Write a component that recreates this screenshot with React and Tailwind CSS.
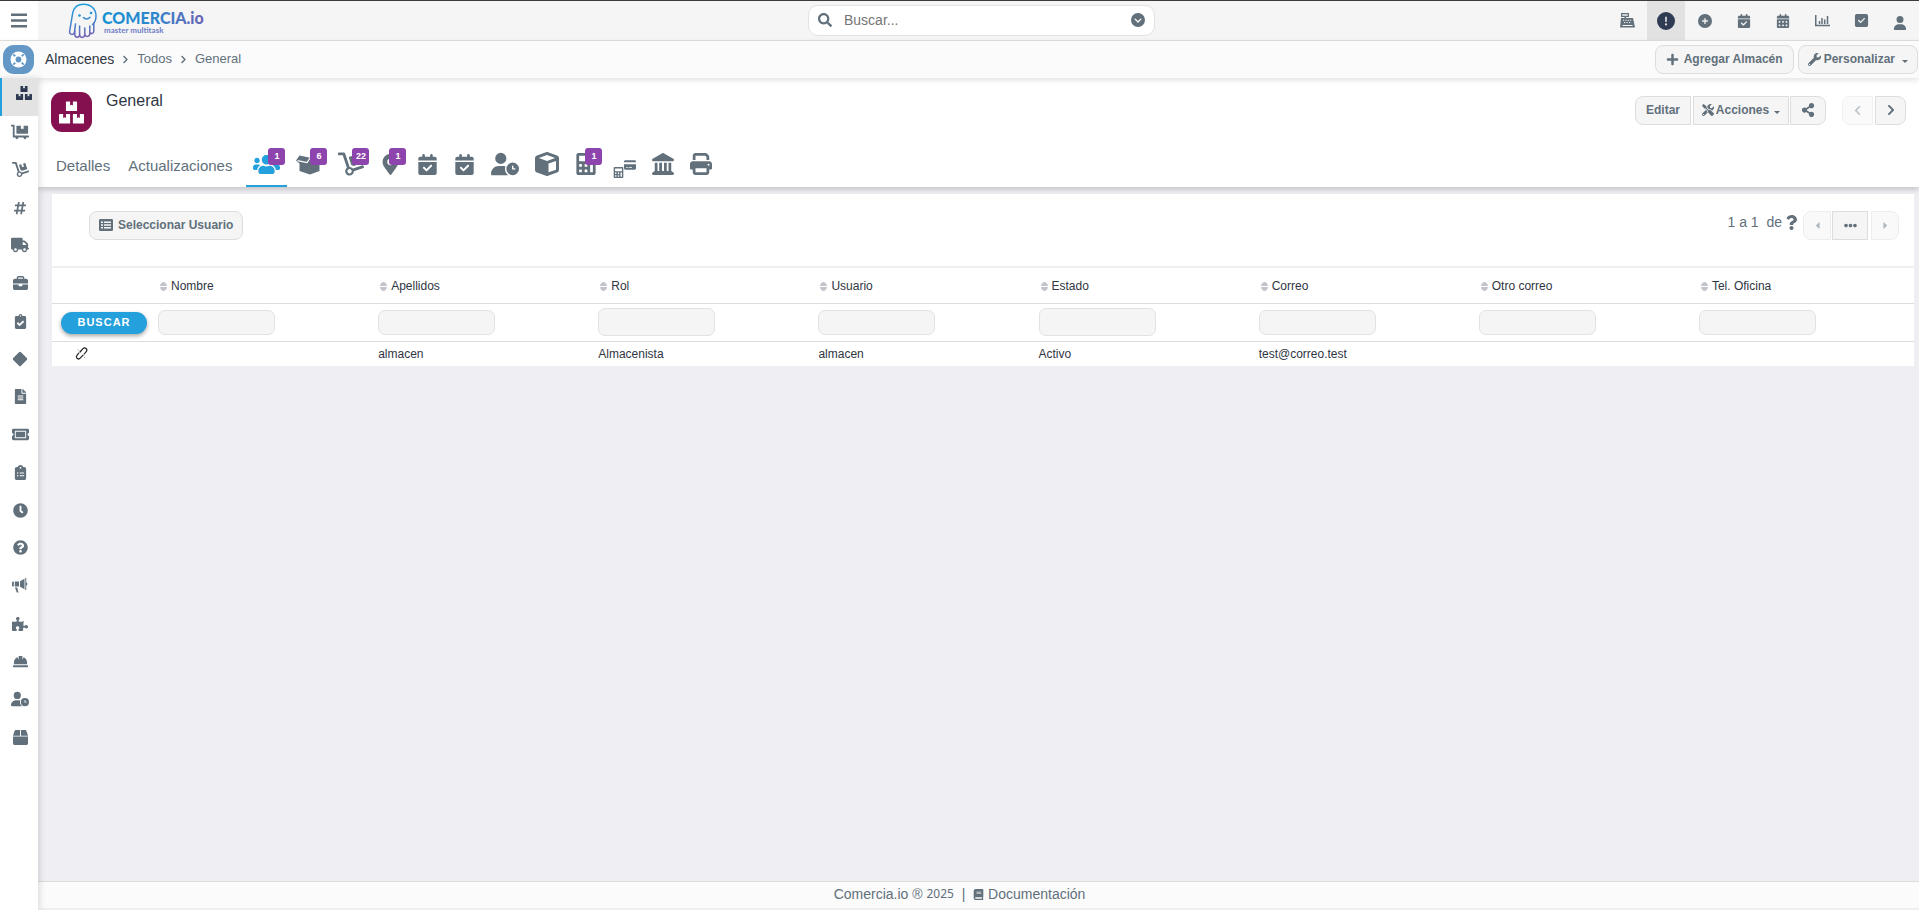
import { useId } from 'react'
import {
  FaBriefcase, FaCalendarCheck, FaCalendarDays, FaCircleChevronDown, FaCircleExclamation, FaCirclePlus,
  FaClipboardList, FaCreditCard, FaCube, FaLandmark, FaPrint, FaSquareCheck, FaTruck, FaUser, FaUserClock,
} from 'react-icons/fa6'
import {
  FaBook, FaBox, FaBoxes, FaCalculator, FaCaretLeft, FaCaretRight, FaChevronLeft, FaChevronRight, FaClipboardCheck,
  FaClock, FaDolly, FaDollyFlatbed, FaEllipsisH, FaFileAlt, FaHardHat, FaHashtag, FaMapMarkerAlt, FaPlus,
  FaPuzzlePiece, FaQuestion, FaQuestionCircle, FaSearch, FaShareAlt, FaTicketAlt, FaTools, FaUsers, FaWrench,
} from 'react-icons/fa'

function Bullhorn() {
  return (
    <svg width="16" height="15" viewBox="0 0 16 15" fill="currentColor">
      <path d="M0 4.500C0 3.500 1 3.500 1.800 3.500V8.500C1 8.500 0 8.500 0 7.500zM2.800 3.500H7V8.500H2.800zM8 3.300L12.500.8v10.400L8 8.700zM13.300 0h1v4.500c1.500.3 1.500 2.700 0 3V12h-1z" />
      <path d="M3 9.500h2.200L6.500 14.500H4.800z" />
    </svg>
  )
}

function Diamond() {
  return (
    <svg width="16" height="16" viewBox="0 0 16 16" fill="currentColor">
      <path d="M7 1.200Q8 .2 9 1.200L14.800 7Q15.800 8 14.800 9L9 14.800Q8 15.800 7 14.800L1.200 9Q.2 8 1.200 7z" />
    </svg>
  )
}

const sideItems = [
  ['Inventario', <FaDollyFlatbed size={18} />],
  ['Traslados', <FaDolly size={17} />],
  ['Series', <FaHashtag size={14} />],
  ['Envíos', <FaTruck size={18} />],
  ['Negocios', <FaBriefcase size={15} />],
  ['Tareas', <FaClipboardCheck size={15} />],
  ['Productos', <Diamond />],
  ['Documentos', <FaFileAlt size={15} />],
  ['Tickets', <FaTicketAlt size={17} />],
  ['Listas', <FaClipboardList size={15} />],
  ['Horarios', <FaClock size={15} />],
  ['Ayuda', <FaQuestionCircle size={15} />],
  ['Anuncios', <Bullhorn />],
  ['Extensiones', <FaPuzzlePiece size={16} />],
  ['Obras', <FaHardHat size={15} />],
  ['Turnos', <FaUserClock size={18} />],
  ['Paquetes', <FaBox size={15} />],
]

const columns = ['Nombre', 'Apellidos', 'Rol', 'Usuario', 'Estado', 'Correo', 'Otro correo', 'Tel. Oficina']
const row = ['', 'almacen', 'Almacenista', 'almacen', 'Activo', 'test@correo.test', '', '']

const button = 'flex items-center justify-center h-[29px] border border-[#dcdddf] bg-[#f5f5f5] pb-px text-xs font-bold text-[#61707b]'

function CashRegister() {
  return (
    <svg width="15" height="15" viewBox="0 0 15 15" fill="currentColor">
      <path d="M1 0h8v4H6v2h6.500l1.500 5H1l1-5h2.500V4H1zM2.300 1.200v1.500h5.400V1.200z" fillRule="evenodd" />
      <path d="M1 5h12l2 9.500H0z" />
      <path d="M3 6.800h1.200v1H3zM5.300 6.800h1.200v1H5.300zM7.600 6.800h1.200v1H7.600zM9.900 6.800h1.200v1H9.900zM4 9h1.200v1H4zM6.500 9h1.200v1H6.500zM9 9h1.200v1H9zM2.500 12h10v1h-10z" fill="#f5f5f5" />
    </svg>
  )
}

function BarChart() {
  return (
    <svg width="15" height="12" viewBox="0 0 15 12" fill="none" stroke="currentColor" strokeWidth="1.500">
      <path d="M.75 0v10.500H15M4.500 6v3M7 3v6M9.700 4.500V9M12.500 1v8" />
    </svg>
  )
}

function Lifebuoy() {
  return (
    <svg width="17" height="17" viewBox="0 0 17 17">
      <circle cx="8.500" cy="8.500" r="8" fill="#fff" />
      <path d="M3.300 3.300l10.400 10.400M13.700 3.300L3.300 13.700" stroke="#6398c6" strokeWidth="1.800" />
      <circle cx="8.500" cy="8.500" r="4.600" fill="#fff" />
      <circle cx="8.500" cy="8.500" r="2.900" fill="#6398c6" />
    </svg>
  )
}

function OpenBox() {
  return (
    <svg width="26" height="21" viewBox="0 0 26 21" fill="currentColor">
      <path d="M3.500 1.500L13 3.500l9-2 3.500 5-2 1V17L14 20.500 3.500 17V9.500L0 6.500z" />
      <path d="M1.500 6.700l9.500 1.800L14 4l3.500 5 2-2 3 1.500" fill="none" stroke="#fff" strokeWidth="1.200" />
    </svg>
  )
}

function Unlink() {
  return (
    <svg width="13" height="13" viewBox="0 0 13 13" fill="none" stroke="#222" strokeWidth="1.200" strokeLinecap="round">
      <path d="M5 5l3-3.300a2 2 0 0 1 3.200 2.900L9.300 7M8 8.200l-2.800 3A2 2 0 0 1 2 8.300L3.700 6.200" />
      <path d="M3 2.500l1 1M9 10l1 1" strokeWidth=".8" stroke="#999" />
    </svg>
  )
}

function TableList() {
  return (
    <svg width="14" height="12" viewBox="0 0 14 12" fill="currentColor">
      <rect width="14" height="12" rx="1.300" />
      <path d="M2 2.500h2v1.500H2zM5 2.500h7v1.500H5zM2 5.300h2v1.500H2zM5 5.300h7v1.500H5zM2 8.100h2v1.500H2zM5 8.100h7v1.500H5z" fill="#f5f5f5" />
    </svg>
  )
}

function SortIcon() {
  return (
    <svg width="7" height="9" viewBox="0 0 7 9" fill="#c3c5cc">
      <path d="M0 4C0 2 2 0 3.500 0S7 2 7 4zM0 5h7c0 2-2 4-3.500 4S0 7 0 5z" />
    </svg>
  )
}

function Caret() {
  return <span className="mt-1 border-x-3 border-t-3 border-x-transparent border-t-[#61707b]" />
}

function Logo() {
  const id = useId()
  return (
    <svg width="138" height="36" viewBox="0 0 138 36" role="img" aria-label="COMERCIA.io master multitask">
      <defs>
        <linearGradient id={id + 'g'} gradientUnits="userSpaceOnUse" x1="8" y1="0" x2="14" y2="36">
          <stop offset="0" stopColor="#1aa3e0" />
          <stop offset=".5" stopColor="#3b86cf" />
          <stop offset="1" stopColor="#7a5db0" />
        </linearGradient>
        <linearGradient id={id + 't'} gradientUnits="userSpaceOnUse" x1="34" y1="0" x2="136" y2="0">
          <stop offset="0" stopColor="#1792d2" />
          <stop offset=".5" stopColor="#2f86cd" />
          <stop offset="1" stopColor="#6a63b5" />
        </linearGradient>
      </defs>
      <g fill="none" stroke={`url(#${id}g)`} strokeWidth="1.500" strokeLinecap="round" strokeLinejoin="round">
        <path d="M7.500 21L6.500 29C6 32.500 1.200 32 1.600 28.500L4.700 10C6 4 10 1.200 15.500 1.200 23 1.200 28 6 28 13c0 4-1.500 7-3.500 8.500" />
        <path d="M6.800 28v3.500c0 3.500 4.800 3.500 4.800 0V23M11.600 31c0 4.500 5.200 4.500 5.200 0v-6M16.800 31c.5 3.500 5 3 5-.5V23M21.800 29c.8 2.500 4 2 4-1V20" />
        <path d="M15.500 14.500c1.500 2 4.500 2 6.500-.3" />
      </g>
      <circle cx="11.500" cy="12.500" r="1.300" fill="#1f93d5" />
      <circle cx="23" cy="10" r="1.300" fill="#1f93d5" />
      <text x="34" y="21" fontFamily="Lato, sans-serif" fontWeight="900" fontSize="16" fill={`url(#${id}t)`}>COMERCIA.io</text>
      <text x="36" y="30" fontFamily="Lato, sans-serif" fontWeight="700" fontSize="8" fill="#6f80c6">master multitask</text>
    </svg>
  )
}

function TopBar() {
  return (
    <header className="flex h-[41px] items-stretch border-t border-b border-t-[#3c3a3d] border-b-[#e0e0e0] bg-[#f5f5f5]">
      <button aria-label="Menú" className="flex w-[38px] shrink-0 items-center justify-center bg-white pb-px">
        <svg width="16" height="15" viewBox="0 0 16 15" fill="#61707b"><path d="M0 .5h16V3H0zM0 6.300h16v2.500H0zM0 12h16v2.500H0z" /></svg>
      </button>
      <div className="flex flex-1 basis-0 items-center pl-[6px]">
        <a href="#inicio" aria-label="Inicio" className="ml-6"><Logo /></a>
      </div>
      <form className="my-1 flex h-[31px] w-[347px] items-center gap-3 rounded-[10px] border border-[#e2e2e2] bg-white px-[9px] pb-[2px]">
        <FaSearch size={14} />
        <input aria-label="Buscar" placeholder="Buscar..." className="min-w-0 flex-1 text-sm outline-none placeholder:text-[#757575]" />
        <button type="button" aria-label="Opciones"><FaCircleChevronDown size={14} /></button>
      </form>
      <div className="flex flex-1 basis-0 items-stretch justify-end gap-px">
        {[
          ['Caja', <CashRegister />],
          ['Avisos', <FaCircleExclamation size={18} className="text-[#2f3b52]" />],
          ['Crear', <FaCirclePlus size={14} />],
          ['Actividades', <FaCalendarCheck size={14} />],
          ['Calendario', <FaCalendarDays size={14} />],
          ['Reportes', <BarChart />],
          ['Tareas', <FaSquareCheck size={15} />],
          ['Perfil', <FaUser size={14} className="mt-1" />],
        ].map(([label, icon]) => (
          <button
            key={label}
            aria-label={label}
            className={`flex w-[38px] items-center justify-center ${label === 'Avisos' ? 'bg-[#e2e2e2]' : ''}`}
          >
            {icon}
          </button>
        ))}
      </div>
    </header>
  )
}

function Breadcrumbs() {
  return (
    <div className="relative z-10 flex h-[37px] items-center justify-between bg-[#fbfbfb] pr-px shadow-[0_2px_6px_rgba(0,0,0,0.12)]">
      <nav className="flex items-center text-[13px]">
        <a href="#modulos" aria-label="Módulos" className="ml-[3px] flex h-[29px] w-[31px] items-center justify-center rounded-[11px] bg-[#6398c6]">
          <Lifebuoy />
        </a>
        <a href="#almacenes" className="ml-[11px] pb-px text-sm text-[#2f3542]">Almacenes</a>
        <FaChevronRight size={9} className="mx-[7px]" />
        <a href="#todos" className="pb-[2px]">Todos</a>
        <FaChevronRight size={9} className="mx-[7px]" />
        <a href="#general" className="pb-[2px]">General</a>
      </nav>
      <div className="flex gap-1">
        <button className={`${button} gap-[5px] rounded-[8px] px-[10px]`}><FaPlus size={13} />Agregar Almacén</button>
        <button className={`${button} gap-[3px] rounded-[8px] px-[9px]`}><FaWrench size={13} />Personalizar<span className="w-px" /><Caret /></button>
      </div>
    </div>
  )
}

function Sidebar() {
  return (
    <nav className="relative z-10 w-[38px] shrink-0 bg-white shadow-[2px_0_6px_rgba(0,0,0,0.12)]">
      <a href="#almacenes" aria-label="Almacenes" className="flex h-[38px] justify-center border-l-2 border-[#24a0dc] bg-[#e3e3e3] pt-[7px] pl-[7px] text-[#2f3b52]">
        <FaBoxes size={16} className="shrink-0" />
      </a>
      <div className="flex h-[637px] flex-col justify-between">
        {sideItems.map(([label, icon]) => (
          <a key={label} href="#menu" aria-label={label} className="flex h-8 items-center justify-center pl-[2px]">{icon}</a>
        ))}
      </div>
    </nav>
  )
}

function Tab({ label, badge, active, children }) {
  return (
    <a
      href="#tab"
      aria-label={label}
      className={`relative flex h-[46px] items-center justify-center border-b-2 px-[7px] pt-[2px] ${active ? 'border-[#24a0dc] text-[#24a0dc]' : 'border-transparent'}`}
    >
      {children}
      {badge && (
        <span className="absolute top-[7px] right-[2px] flex size-[17px] items-center justify-center rounded-[3px] bg-[#8e44ad] text-[9px] font-bold text-white">
          {badge}
        </span>
      )}
    </a>
  )
}

function RecordHeader() {
  return (
    <section className="bg-white shadow-[0_2px_6px_rgba(0,0,0,0.2)]">
      <div className="flex items-start justify-between pr-[13px] pl-[13px] pt-[14px]">
        <div className="flex items-start gap-[14px]">
          <div className="flex h-10 w-[41px] items-center justify-center rounded-[11px] bg-[#84104f] text-white"><FaBoxes size={25} /></div>
          <h1 className="text-base leading-[18px] text-[#2f3542]">General</h1>
        </div>
        <div className="mt-1 flex">
          <button className={`${button} w-14 rounded-l-[8px]`}>Editar</button>
          <button className={`${button} ml-[2px] w-24 gap-[2px]`}><FaTools size={12} />Acciones<span className="w-px" /><Caret /></button>
          <button aria-label="Compartir" className={`${button} ml-px w-9 rounded-r-[8px]`}><FaShareAlt size={14} /></button>
          <button aria-label="Anterior" disabled className={`${button} ml-4 w-[31px] rounded-l-[8px] opacity-40`}><FaChevronLeft size={11} /></button>
          <button aria-label="Siguiente" className={`${button} ml-[2px] w-[31px] rounded-r-[8px]`}><FaChevronRight size={12} /></button>
        </div>
      </div>
      <nav className="mt-[9px] flex items-center pl-[18px] text-[15px]">
        <a href="#detalles" className="mr-[18px] pt-1">Detalles</a>
        <a href="#actualizaciones" className="mr-[14px] pt-1">Actualizaciones</a>
        <div className="flex gap-[2px]">
          <Tab label="Usuarios" badge="1" active><FaUsers size={27} /></Tab>
          <Tab label="Productos" badge="6"><OpenBox /></Tab>
          <Tab label="Traslados" badge="22"><FaDolly size={26} /></Tab>
          <Tab label="Ubicaciones" badge="1"><FaMapMarkerAlt size={21} /></Tab>
          <Tab label="Calendario"><FaCalendarCheck size={21} /></Tab>
          <Tab label="Actividades"><FaCalendarCheck size={21} /></Tab>
          <Tab label="Turnos"><FaUserClock size={28} /></Tab>
          <Tab label="Inventario"><FaCube size={24} /></Tab>
          <Tab label="Cajas" badge="1"><FaCalculator size={22} /></Tab>
          <Tab label="Terminales">
            <span className="mt-2 flex items-start">
              <FaCalculator size={11} className="mt-2" />
              <FaCreditCard size={12} />
            </span>
          </Tab>
          <Tab label="Bancos"><FaLandmark size={22} /></Tab>
          <Tab label="Impresoras"><FaPrint size={22} /></Tab>
        </div>
      </nav>
    </section>
  )
}

function UsersPanel() {
  return (
    <section className="mt-[7px] mr-[5px] ml-[14px] bg-white">
      <div className="flex h-[72px] items-start justify-between pt-[17px] pr-[15px] pl-[37px]">
        <button className={`${button} gap-[5px] rounded-[8px] px-[9px]`}><TableList />Seleccionar Usuario</button>
        <div className="flex">
          <p className="flex h-[22px] items-center text-sm whitespace-pre">1 a 1  de<FaQuestion size={15} className="ml-[2px]" /></p>
          <button aria-label="Página anterior" disabled className={`${button} ml-[4px] w-7 rounded-l-[8px] opacity-50`}><FaCaretLeft size={11} /></button>
          <button aria-label="Páginas" className={`${button} ml-px w-9`}><FaEllipsisH size={13} /></button>
          <button aria-label="Página siguiente" disabled className={`${button} ml-[3px] w-7 rounded-r-[8px] opacity-50`}><FaCaretRight size={11} /></button>
        </div>
      </div>
      <table className="w-full table-fixed border-t-2 border-[#f0f0f0] text-left text-xs text-[#2f3542]">
        <thead>
          <tr className="h-9 border-b border-[#dcdddf]">
            <td className="w-[101px]" />
            {columns.map((name) => (
              <th key={name} className="pt-[2px] pl-[7px] font-normal">
                <span className="flex items-center gap-1"><SortIcon />{name}</span>
              </th>
            ))}
          </tr>
          <tr className="h-[38px] border-b border-[#dcdddf]">
            <td className="pt-px pl-[9px]">
              <button className="flex h-[22px] w-[86px] items-center justify-center rounded-full bg-[#24a0dc] text-[11px] font-bold tracking-[1px] text-white shadow-[0_2px_4px_rgba(0,0,0,0.35)]">
                BUSCAR
              </button>
            </td>
            {columns.map((name) => (
              <td key={name} className="pl-[5px]">
                <input
                  aria-label={name}
                  className={`block w-[117px] rounded-[7px] border border-[#e2e2e2] bg-[#f5f5f5] px-2 ${name === 'Rol' || name === 'Estado' ? 'h-7' : 'h-[25px]'}`}
                />
              </td>
            ))}
          </tr>
        </thead>
        <tbody>
          <tr className="h-[25px]">
            <td className="pl-[23px]"><button aria-label="Desvincular" className="block"><Unlink /></button></td>
            {row.map((value, i) => (
              <td key={columns[i]} className="pt-px pl-[5px]">{value}</td>
            ))}
          </tr>
        </tbody>
      </table>
    </section>
  )
}

export default function App() {
  return (
    <div className="flex min-h-screen flex-col bg-[#eeeef3] font-['Liberation_Sans',Arial,sans-serif] text-[#61707b]">
      <TopBar />
      <Breadcrumbs />
      <div className="flex flex-1">
        <Sidebar />
        <div className="flex min-w-0 flex-1 flex-col">
          <RecordHeader />
          <main className="flex-1">
            <UsersPanel />
          </main>
          <footer className="mb-[2px] flex h-[27px] items-center justify-center border-t border-[#dcdddf] bg-[#fbfbfb] pr-[38px] pb-[2px] text-sm whitespace-pre">
            Comercia.io ® <span className="font-['Noto_Sans'] text-xs">2025</span>  |  <FaBook size={11} className="mr-1" />
            <a href="#documentacion">Documentación</a>
          </footer>
        </div>
      </div>
    </div>
  )
}
